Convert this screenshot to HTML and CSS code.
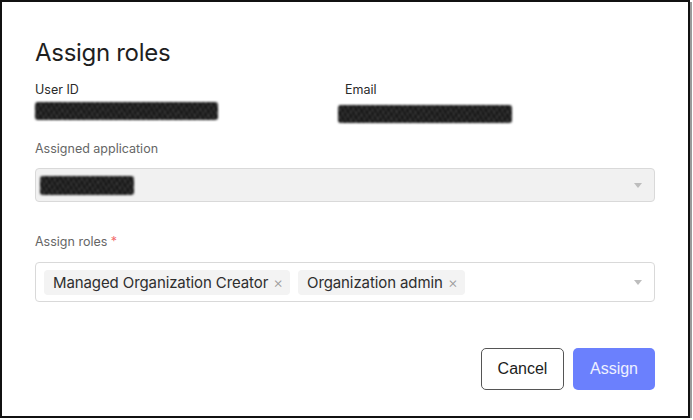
FILE: index.html
```html
<!DOCTYPE html>
<html lang="en">
<head>
<meta charset="utf-8">
<title>Assign roles</title>
<link rel="stylesheet" href="styles.css">
</head>
<body>
<div class="frame">
  <h1 class="title">Assign roles</h1>
  <div class="info">
    <div class="info-col">
      <div class="info-label">User ID</div>
      <div class="redact redact-user"></div>
    </div>
    <div class="info-col info-col-email">
      <div class="info-label email-label">Email</div>
      <div class="redact redact-email"></div>
    </div>
  </div>

  <div class="field field-app">
    <div class="field-label">Assigned application</div>
    <div class="select select-disabled">
      <div class="redact redact-app"></div>
      <span class="caret"></span>
    </div>
  </div>

  <div class="field field-roles">
    <div class="field-label">Assign roles <span class="req">*</span></div>
    <div class="select select-multi">
      <div class="tags">
        <span class="tag">Managed Organization Creator <span class="tag-x">×</span></span>
        <span class="tag">Organization admin <span class="tag-x">×</span></span>
      </div>
      <span class="caret"></span>
    </div>
  </div>

  <div class="actions">
    <button class="btn btn-cancel">Cancel</button>
    <button class="btn btn-assign">Assign</button>
  </div>
</div>
</body>
</html>
```

FILE: styles.css
```css
* { box-sizing: border-box; }
html, body { margin: 0; padding: 0; background: #fff; }
body {
  font-family: Inter, "Open Sans", "Liberation Sans", sans-serif;
  color: #222;
}
.frame {
  width: 690px;
  height: 418px;
  border: 2px solid #111;
  box-shadow: 2px 2px 0 #9a9a9a;
  padding: 36px 33px 0 33px;
  display: flex;
  flex-direction: column;
}
.title {
  margin: 0;
  font-size: 24px;
  font-weight: 400;
  line-height: 30px;
  letter-spacing: -0.3px;
  color: #1f1f1f;
}
.info {
  display: flex;
  margin-top: 14px;
}
.info-col { width: 303px; }
.info-col-email { width: auto; }
.info-label {
  font-size: 12.5px;
  line-height: 16px;
  color: #2a2a2a;
}
.email-label { margin-left: 7px; }
.redact {
  background: #141414;
  border-radius: 3px;
  filter: blur(1.1px);
  background-image: repeating-linear-gradient(60deg, rgba(255,255,255,0.18) 0 1px, transparent 1px 4px),
                    repeating-linear-gradient(-50deg, rgba(255,255,255,0.12) 0 1px, transparent 1px 5px);
}
.redact-user { width: 183px; height: 18px; margin-top: 4px; }
.redact-email { width: 174px; height: 18px; margin-top: 7px; }
.redact-app { width: 94px; height: 19px; margin-left: 4px; }

.field-app { margin-top: 18px; }
.field-label {
  font-size: 12.5px;
  line-height: 16px;
  color: #666;
}
.select {
  margin-top: 11px;
  border: 1px solid #d9d9d9;
  border-radius: 4px;
  display: flex;
  align-items: center;
  justify-content: space-between;
  padding-right: 12px;
}
.select-disabled {
  height: 34px;
  background: #f1f1f1;
}
.caret {
  width: 0;
  height: 0;
  border-left: 4.5px solid transparent;
  border-right: 4.5px solid transparent;
  border-top: 5px solid #bdbdbd;
}
.field-roles { margin-top: 32px; }
.req { color: #f26b6b; }
.field-roles .select { margin-top: 12px; }
.select-multi {
  height: 40px;
  background: #fff;
  padding-left: 8px;
}
.tags { display: flex; gap: 8px; }
.tag {
  background: #f3f3f3;
  border-radius: 4px;
  height: 25px;
  padding: 0 7px 0 9px;
  font-size: 15px;
  line-height: 25px;
  color: #2e2e2e;
  letter-spacing: -0.1px;
  white-space: nowrap;
}
.tag-x {
  color: #9a9a9a;
  font-size: 15px;
  font-weight: 300;
  margin-left: 1px;
}
.actions {
  margin-top: 46px;
  display: flex;
  justify-content: flex-end;
  gap: 9px;
}
.btn {
  height: 42px;
  border-radius: 5px;
  font-family: "Liberation Sans", Arial, sans-serif;
  font-size: 16px;
  cursor: pointer;
}
.btn-cancel {
  width: 83px;
  background: #fff;
  border: 1.5px solid #555;
  color: #1c1c1c;
}
.btn-assign {
  width: 82px;
  background: #6b80fd;
  border: none;
  color: #eef1ff;
}
```
